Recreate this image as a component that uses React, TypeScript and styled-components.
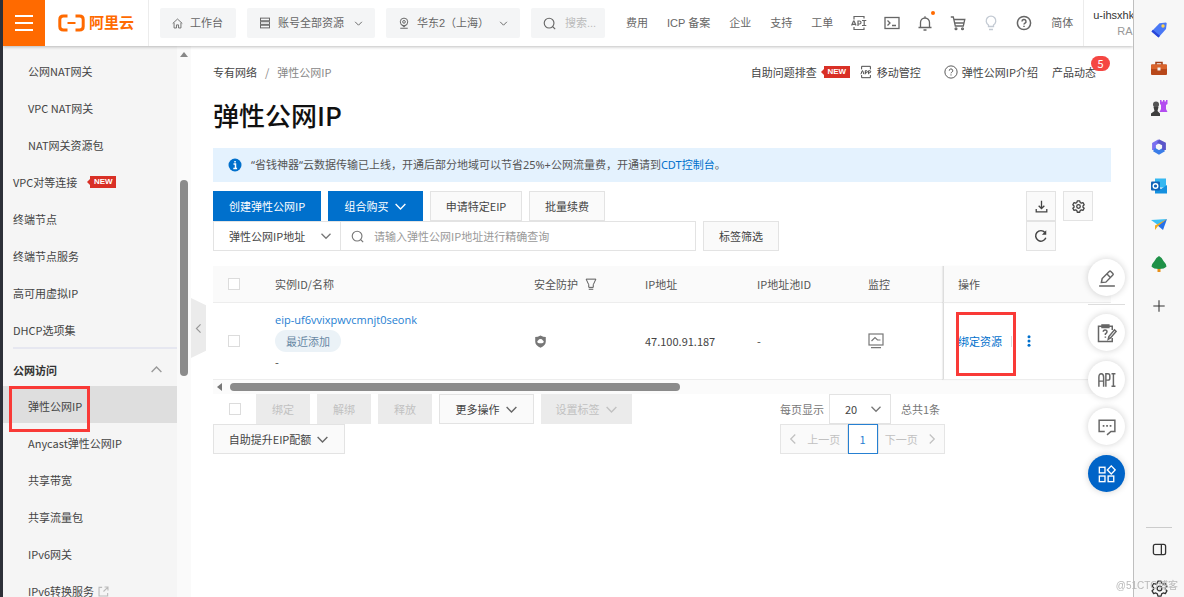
import React from 'react';
import styled, { createGlobalStyle, css } from 'styled-components';

const line = '#e5e5e5';
const blue = '#0070cc';

const Global = createGlobalStyle`
  * { box-sizing: border-box; }
  body { margin: 0; background: #fff; }
  body, button, input, select, table {
    font-family: "Noto Sans CJK SC", "Noto Sans", sans-serif;
    font-size: 11px;
    line-height: 16px;
    color: #444;
  }
  a { color: inherit; text-decoration: none; }
  button { cursor: pointer; }
  svg { display: block; flex: none; }
`;

/* ---------- shell ---------- */
const Shell = styled.div`
  display: flex;
  height: 100vh;
  overflow: hidden;
  border-left: 3px solid #2d3038;
`;
const Console = styled.div`
  flex: 1;
  min-width: 0;
  display: flex;
  flex-direction: column;
`;
const Body = styled.div`
  flex: 1;
  min-height: 0;
  display: flex;
`;

/* ---------- header ---------- */
const Header = styled.header`
  display: flex;
  align-items: center;
  height: 46px;
  overflow: hidden;
  background: #fff;
  font-family: "Liberation Sans", "Noto Sans CJK SC", sans-serif;
  white-space: nowrap;
  color: #666;
`;
const HeaderShade = styled.div`
  position: relative;
  z-index: 2;
  flex: none;
  background: #fff;
  box-shadow: 0 1px 3px rgba(0, 0, 0, 0.25);
`;
const MenuButton = styled.button`
  flex: none;
  display: grid;
  place-items: center;
  width: 42px;
  height: 46px;
  padding: 0;
  border: 0;
  background: #ff6a00;
`;
const Logo = styled.a`
  flex: none;
  display: flex;
  align-items: center;
  gap: 4px;
  width: 104px;
  height: 46px;
  margin-right: 11px;
  padding-left: 13px;
  border-right: 1px solid #ececec;
  font-size: 15px;
  line-height: 20px;
  font-weight: 700;
  color: #ff6a00;
`;
const Chips = styled.div`
  flex: none;
  display: flex;
  gap: 11px;
  margin-right: 21px;
`;
const Chip = styled.button<{ $w: number }>`
  display: flex;
  align-items: center;
  gap: 7px;
  width: ${p => p.$w}px;
  height: 30px;
  padding: 0 12px;
  border: 0;
  border-radius: 2px;
  background: #f4f5f6;
  font-family: inherit;
  color: #666;
  svg:last-child:not(:first-child) { margin-left: auto; }
`;
const HeaderSearch = styled.label`
  display: flex;
  align-items: center;
  gap: 9px;
  width: 74px;
  height: 30px;
  padding: 0 12px;
  border-radius: 2px;
  background: #f4f5f6;
  input {
    width: 32px;
    padding: 0;
    border: 0;
    background: none;
    font-family: inherit;
  }
  input::placeholder { color: #bbb; opacity: 1; }
`;
const TopLinks = styled.nav`
  flex: none;
  display: flex;
  gap: 19px;
  margin-right: 18px;
`;
const TopIcons = styled.div`
  flex: none;
  display: flex;
  align-items: center;
  gap: 17px;
  margin-right: 19px;
`;
const IconButton = styled.button`
  position: relative;
  display: grid;
  place-items: center;
  width: 16px;
  height: 16px;
  padding: 0;
  border: 0;
  background: none;
  color: #666;
`;
const Dot = styled.i`
  position: absolute;
  top: -4px;
  right: -2px;
  width: 4px;
  height: 4px;
  border-radius: 50%;
  background: #ff6a00;
`;
const User = styled.div`
  flex: 1 0 auto;
  display: flex;
  flex-direction: column;
  justify-content: center;
  height: 46px;
  margin-left: 10px;
  padding-left: 9px;
  border-left: 1px solid #ececec;
  color: #333;
  small { padding-left: 24px; font-size: 11px; color: #999; }
`;

/* ---------- side navigation ---------- */
const Side = styled.nav`
  flex: none;
  width: 174px;
  padding-top: 5px;
  overflow: hidden;
  background: #f5f5f5;
`;
const SideItem = styled.a<{ $sub?: boolean; $active?: boolean }>`
  display: flex;
  align-items: center;
  gap: 4px;
  height: 37px;
  padding: 3px 0 0 ${p => (p.$sub ? 25 : 10)}px;
  background: ${p => (p.$active ? '#dedede' : 'none')};
`;
const SideGroup = styled.button`
  display: flex;
  align-items: center;
  justify-content: space-between;
  width: 164px;
  height: 39px;
  margin-left: 10px;
  padding: 4px 14px 0 0;
  border: 0;
  border-top: 2px solid #e6e7f0;
  background: none;
  font-weight: 700;
  color: #333;
  svg { color: #999; }
`;
const SideScroll = styled.div`
  flex: none;
  display: flex;
  flex-direction: column;
  align-items: center;
  width: 14px;
  padding-top: 6px;
  background: #fafafa;
`;
const SideThumb = styled.div`
  width: 8px;
  height: 196px;
  margin-top: 123px;
  border-radius: 4px;
  background: #8b8b8b;
`;
const NewTag = styled.span<{ $ml: number }>`
  position: relative;
  width: 26px;
  margin-left: ${p => p.$ml}px;
  background: #d93026;
  font-family: "Liberation Sans", sans-serif;
  font-size: 8px;
  line-height: 12px;
  font-weight: 700;
  text-align: center;
  color: #fff;
  &::before {
    content: "";
    position: absolute;
    left: -3px;
    top: 3px;
    border: solid transparent;
    border-width: 3px 3px 3px 0;
    border-right-color: #d93026;
  }
`;
const Anchor = styled.div`
  position: relative;
`;
const Mark = styled.div`
  position: absolute;
  z-index: 4;
  border: 3px solid #f93a37;
  pointer-events: none;
`;
const NavMark = styled(Mark)`
  left: 6px;
  top: 0;
  width: 81px;
  height: 46px;
`;
const OpMark = styled(Mark)`
  right: 95px;
  top: 46px;
  width: 60px;
  height: 64px;
`;

/* ---------- main ---------- */
const Main = styled.main`
  position: relative;
  flex: 1;
  min-width: 0;
  padding: 17px 22px 0;
  white-space: nowrap;
`;
const Collapse = styled.button`
  position: absolute;
  left: 0;
  top: 252px;
  display: grid;
  place-items: center;
  width: 15px;
  height: 60px;
  padding: 0;
  border: 0;
  background: #ebebeb;
  color: #999;
  clip-path: polygon(0 0, 100% 12%, 100% 88%, 0 100%);
`;
const TopRow = styled.div`
  display: flex;
  justify-content: space-between;
  align-items: center;
  height: 18px;
`;
const Crumbs = styled.nav`
  display: flex;
  gap: 8px;
  span { color: #888; }
`;
const HelpLinks = styled.div`
  display: flex;
  align-items: center;
  padding-right: 15px;
`;
const HelpLink = styled.a<{ $gap: number }>`
  position: relative;
  display: flex;
  align-items: center;
  gap: 4px;
  margin-left: ${p => p.$gap}px;
`;
const Badge = styled.span`
  position: absolute;
  right: -14px;
  top: -8px;
  width: 19px;
  border-radius: 8px;
  background: #f54743;
  line-height: 15px;
  text-align: center;
  color: #fff;
`;
const Title = styled.h1`
  margin: 15px 0;
  font-size: 26px;
  line-height: 37px;
  font-weight: 500;
  color: #111;
`;
const Notice = styled.p`
  display: flex;
  align-items: center;
  height: 34px;
  margin: 0 0 9px;
  padding: 0 15px;
  background: #e4f2fe;
  font-family: "Noto Sans", "Noto Sans CJK SC", sans-serif;
  color: #555;
  svg { margin-right: 9px; }
  a { color: ${blue}; }
`;
const Toolbar = styled.div`
  display: flex;
  justify-content: space-between;
  margin-bottom: 15px;
`;
const Rows = styled.div`
  display: flex;
  flex-direction: column;
`;
const Line = styled.div<{ $gap?: number }>`
  display: flex;
  align-items: center;
  gap: ${p => p.$gap ?? 7}px;
`;
const Btn = styled.button<{ $kind?: 'primary'; $w: number }>`
  flex: none;
  display: flex;
  align-items: center;
  justify-content: center;
  gap: 5px;
  width: ${p => p.$w}px;
  height: 30px;
  padding: 0;
  border: 1px solid #e3e3e3;
  background: #fafafa;
  svg { color: #666; }
  ${p => p.$kind === 'primary' && css`
    border-color: ${blue};
    background: ${blue};
    &, svg { color: #fff; }
  `}
  &:disabled {
    border-color: #ebebeb;
    background: #ebebeb;
    &, svg { color: #c1c1c1; }
  }
`;
const Tools = styled.div`
  display: grid;
  grid-template-columns: 30px 30px;
  column-gap: 7px;
  margin-right: 18px;
  svg { color: #444; }
`;
const SelectBox = styled.label<{ $w: number }>`
  flex: none;
  display: flex;
  align-items: center;
  width: ${p => p.$w}px;
  height: 30px;
  padding-right: 8px;
  border: 1px solid #e3e3e3;
  color: #777;
  select {
    flex: 1;
    min-width: 0;
    height: 28px;
    padding: 0 0 0 15px;
    border: 0;
    appearance: none;
    background: none;
  }
`;
const SearchBox = styled.label`
  flex: none;
  display: flex;
  align-items: center;
  gap: 10px;
  width: 356px;
  height: 30px;
  margin: 0 7px 0 -1px;
  padding-left: 10px;
  border: 1px solid #e3e3e3;
  color: #777;
  input {
    flex: 1;
    padding: 0;
    border: 0;
    outline: 0;
  }
  input::placeholder { color: #999; opacity: 1; }
`;

/* ---------- table ---------- */
const Table = styled.table`
  width: 100%;
  table-layout: fixed;
  border-collapse: separate;
  border-spacing: 0;
  th, td {
    padding: 0 0 0 18px;
    border-bottom: 1px solid #ededed;
    font-weight: 400;
    text-align: left;
  }
  th { height: 37px; background: #fafafa; color: #555; }
  td { height: 77px; line-height: 20px; }
  th:first-child, td:first-child { padding-left: 15px; }
  th:last-child, td:last-child {
    padding-left: 14px;
    border-left: 1px solid #ddd;
    box-shadow: -1px 0 1px rgba(0, 0, 0, 0.06);
  }
`;
const Check = styled.input.attrs({ type: 'checkbox' })`
  display: block;
  appearance: none;
  flex: none;
  width: 12px;
  height: 12px;
  margin: 0;
  border: 1px solid #dcdcdc;
  background: #fff;
`;
const Inst = styled.a`
  display: block;
  font-family: "Open Sans", "Noto Sans CJK SC", sans-serif;
  color: #2680d2;
`;
const Pill = styled.span`
  display: block;
  width: 66px;
  border-radius: 11px;
  background: #ebf2f7;
  line-height: 22px;
  text-align: center;
  color: #6787a3;
`;
const Ops = styled.div`
  display: flex;
  align-items: center;
  gap: 9px;
  color: ${blue};
  i { width: 1px; height: 11px; background: #ddd; }
`;
const HScroll = styled.div`
  display: flex;
  align-items: center;
  gap: 8px;
  height: 14px;
  padding-left: 4px;
  background: #fbfbfb;
`;
const HThumb = styled.div`
  width: 450px;
  height: 8px;
  border-radius: 4px;
  background: #8b8b8b;
`;
const Footer = styled.div`
  display: flex;
  justify-content: space-between;
  padding-right: 166px;
`;
const BatchLine = styled(Line)`
  padding-left: 16px;
  ${Check} { margin-right: 8px; }
`;
const PageSize = styled.div`
  display: flex;
  align-items: center;
  height: 30px;
  color: #777;
  ${SelectBox} { margin: 0 10px 0 5px; }
`;
const Pager = styled.nav`
  display: flex;
  width: 165px;
  height: 30px;
`;
const PageBtn = styled.button<{ $on?: boolean }>`
  flex: ${p => (p.$on ? '0 0 30px' : '1')};
  display: flex;
  align-items: center;
  justify-content: center;
  gap: 8px;
  padding: 0;
  border: 1px solid ${p => (p.$on ? '#2680d2' : line)};
  background: ${p => (p.$on ? '#fff' : '#fafafa')};
  color: ${p => (p.$on ? '#2680d2' : '#c1c1c1')};
`;

/* ---------- floating helpers ---------- */
const Float = styled.aside`
  position: absolute;
  z-index: 3;
  right: 8px;
  top: 213px;
  display: flex;
  flex-direction: column;
  gap: 10px;
  hr {
    width: 37px;
    height: 1px;
    margin: -2px 0 -1px;
    border: 0;
    background: #ddd;
  }
`;
const Round = styled.button<{ $solid?: boolean }>`
  display: grid;
  place-items: center;
  width: 37px;
  height: 37px;
  padding: 0;
  border: 0;
  border-radius: 50%;
  background: ${p => (p.$solid ? '#0064c8' : '#fff')};
  color: ${p => (p.$solid ? '#fff' : '#666')};
  box-shadow: 0 0 7px rgba(0, 0, 0, 0.18);
`;

/* ---------- browser rail ---------- */
const Rail = styled.aside`
  position: relative;
  z-index: 3;
  flex: none;
  display: flex;
  flex-direction: column;
  align-items: center;
  justify-content: space-between;
  width: 51px;
  padding-top: 21px;
  border-left: 1px solid #bfbfbf;
  background: #f7f7f7;
`;
const RailGroup = styled.div`
  display: flex;
  flex-direction: column;
  align-items: center;
  gap: 21px;
  hr { width: 26px; height: 1px; margin: 0 0 -9px; border: 0; background: #ccc; }
`;
const RailButton = styled.button<{ $top?: number }>`
  display: grid;
  place-items: center;
  width: 18px;
  height: 18px;
  margin-top: ${p => p.$top ?? 0}px;
  padding: 0;
  border: 0;
  background: none;
  color: #333;
`;
const Watermark = styled.span`
  position: fixed;
  z-index: 5;
  right: 6px;
  bottom: 3px;
  font-family: "Liberation Sans", "Noto Sans CJK SC", sans-serif;
  font-size: 10px;
  color: #b9b9b9;
`;

/* ---------- drawings ---------- */
type IconProps = { size?: number; sw?: number; children: React.ReactNode };
const Icon = ({ size = 16, sw = 1.3, children }: IconProps) => (
  <svg width={size} height={size} viewBox="0 0 16 16" fill="none" stroke="currentColor" strokeWidth={sw} aria-hidden="true">
    {children}
  </svg>
);
const Chevron = ({ dir = 'down', size = 12 }: { dir?: 'down' | 'up' | 'left' | 'right'; size?: number }) => {
  const d = { down: 'M2 5l6 6 6-6', up: 'M2 11l6-6 6 6', left: 'M11 2L5 8l6 6', right: 'M5 2l6 6-6 6' }[dir];
  return <Icon size={size} sw={1.7}><path d={d} /></Icon>;
};
const SearchIcon = () => <Icon size={13} sw={1.4}><circle cx="7.5" cy="7.5" r="6" /><path d="M12 12l3 3" /></Icon>;
const HelpMark = () => <path d="M6 6.500a2 2 0 1 1 2.800 1.800q-.8.400-.8 1.200M8 10.700v1.300" />;
const ApiIcon = () => (
  <Icon sw={1.2}>
    <path d="M3 4.500V1.500h10v2M3 12v2.500h10V12.500M.6 10.500L2.500 6h.6L5 10.500M1.500 9.300h2.800M7 11V6h1.500a1.500 1.500 0 0 1 0 3H7M11 5.500h4.300M11 10.500h4.300M13.200 5.500v5" />
  </Icon>
);
const AppIcon = () => (
  <Icon size={14} sw={1.1}>
    <path d="M3 5V1.500h10V5M3 11.500v3h10v-3M2.200 10.500L3.700 6.500h.5l1.400 4M7.200 10.500v-4h1.200a1.100 1.100 0 0 1 0 2.300H7.200M11 10.500v-4h1.200a1.100 1.100 0 0 1 0 2.300H11" />
  </Icon>
);
const GearIcon = ({ size = 16, sw = 1.3 }: { size?: number; sw?: number }) => (
  <Icon size={size} sw={sw}>
    <path strokeLinejoin="round" d="M6.500 1h3l.5 2 1.500.9 2-.6 1.500 2.600L13.500 7.300v1.500L15 10.200l-1.500 2.600-2-.6-1.500.9-.5 2h-3l-.5-2-1.500-.9-2 .6L1 10.200l1.500-1.400V7.300L1 5.900l1.500-2.600 2 .6L6 3z" />
    <circle cx="8" cy="8" r="2.200" />
  </Icon>
);

const sideTop = [
  { t: '公网NAT网关', sub: true }, { t: 'VPC NAT网关', sub: true }, { t: 'NAT网关资源包', sub: true },
  { t: 'VPC对等连接', tag: true }, { t: '终端节点' }, { t: '终端节点服务' }, { t: '高可用虚拟IP' }, { t: 'DHCP选项集' },
];
const sideBottom = ['Anycast弹性公网IP', '共享带宽', '共享流量包', 'IPv6网关'];

export default function App() {
  return (
    <Shell>
      <Global />
      <Console>
        <HeaderShade>
          <Header>
            <MenuButton aria-label="菜单">
              <svg width="20" height="16" viewBox="0 0 20 16" stroke="#fff" strokeWidth="1.800"><path d="M1 1h18M1 8h18M1 15h18" /></svg>
            </MenuButton>
            <Logo href="#">
              <svg width="27" height="18" viewBox="0 0 27 18" fill="none" stroke="#ff6a00">
                <path strokeWidth="3" d="M9.500 2H5.500Q1.800 2 1.800 5.500v7Q1.800 16 5.500 16h4M17.500 2h4q3.700 0 3.700 3.500v7q0 3.500-3.700 3.500h-4" />
                <path strokeWidth="2" d="M9.500 9h8" />
              </svg>
              阿里云
            </Logo>
            <Chips>
              <Chip $w={76}><Icon size={11}><path d="M1 8L8 1.500 15 8M3 7v7.500h3.500V10h3v4.500H13V7" strokeLinejoin="round" /></Icon>工作台</Chip>
              <Chip $w={128}><Icon size={12}><rect x="2" y="1.500" width="12" height="3.500" /><rect x="2" y="6.300" width="12" height="3.500" /><rect x="2" y="11" width="12" height="3.500" /></Icon>账号全部资源<Chevron size={9} /></Chip>
              <Chip $w={134}><Icon size={12}><circle cx="8" cy="6.500" r="5" /><circle cx="8" cy="6.500" r="1.800" /><path d="M4.500 10L8 13.500 11.500 10M3 15h10" /></Icon>华东2（上海）<Chevron size={9} /></Chip>
              <HeaderSearch><SearchIcon /><input aria-label="搜索" placeholder="搜索..." /></HeaderSearch>
            </Chips>
            <TopLinks>
              {['费用', 'ICP 备案', '企业', '支持', '工单'].map(t => <a href="#" key={t}>{t}</a>)}
            </TopLinks>
            <TopIcons>
              <IconButton aria-label="API"><ApiIcon /></IconButton>
              <IconButton aria-label="终端"><Icon><rect x="1" y="2.500" width="14" height="11" /><path d="M3.500 5.500L6 8l-2.500 2.500M8 10.500h4" /></Icon></IconButton>
              <IconButton aria-label="消息"><Icon><path d="M1.500 12.500h13M3.500 12.500V7.500a4.500 4.500 0 0 1 9 0v5M8 1.300V3M6.500 15h3" /></Icon><Dot /></IconButton>
              <IconButton aria-label="购物车"><Icon><path d="M.8 2H3.300l2 9h8l1.500-6.500H4M5 8h9" /><circle cx="6" cy="13.800" r=".9" /><circle cx="12.500" cy="13.800" r=".9" /></Icon></IconButton>
              <IconButton aria-label="提示"><svg width="16" height="16" viewBox="0 0 16 16" fill="none" stroke="#c3cad3" strokeWidth="1.300"><path d="M5.500 11.500V10a4.800 4.800 0 1 1 5 0v1.500zM6 14.500h4" /></svg></IconButton>
              <IconButton aria-label="帮助"><Icon sw={1.5}><circle cx="8" cy="8" r="6.600" /><HelpMark /></Icon></IconButton>
            </TopIcons>
            <a href="#">简体</a>
            <User><span>u-ihsxhk</span><small>RA</small></User>
          </Header>
        </HeaderShade>

        <Body>
          <Side>
            {sideTop.map(i => (
              <SideItem href="#" key={i.t} $sub={i.sub}>{i.t}{i.tag && <NewTag $ml={9}>NEW</NewTag>}</SideItem>
            ))}
            <SideGroup>公网访问<Chevron dir="up" size={13} /></SideGroup>
            <Anchor>
              <SideItem href="#" $sub $active>弹性公网IP</SideItem>
              <NavMark />
            </Anchor>
            {sideBottom.map(t => <SideItem href="#" key={t} $sub>{t}</SideItem>)}
            <SideItem href="#" $sub>IPv6转换服务
              <svg width="11" height="11" viewBox="0 0 16 16" fill="none" stroke="#bbb" strokeWidth="1.600"><path d="M6 2H1.500v12.500H14V10M9.500 1.500h5v5M14.500 1.500L8 8" /></svg>
            </SideItem>
          </Side>
          <SideScroll>
            <svg width="8" height="5" viewBox="0 0 8 5" fill="#888"><path d="M4 0l4 5H0z" /></svg>
            <SideThumb />
          </SideScroll>

          <Main>
            <Collapse aria-label="收起"><Chevron dir="left" size={11} /></Collapse>
            <TopRow>
              <Crumbs><a href="#">专有网络</a><span>/</span><span>弹性公网IP</span></Crumbs>
              <HelpLinks>
                <HelpLink href="#" $gap={0}>自助问题排查<NewTag $ml={3}>NEW</NewTag></HelpLink>
                <HelpLink href="#" $gap={9}><AppIcon />移动管控</HelpLink>
                <HelpLink href="#" $gap={23}><Icon size={14} sw={1}><circle cx="8" cy="8" r="7" /><HelpMark /></Icon>弹性公网IP介绍</HelpLink>
                <HelpLink href="#" $gap={14}>产品动态<Badge>5</Badge></HelpLink>
              </HelpLinks>
            </TopRow>
            <Title>弹性公网IP</Title>
            <Notice>
              <svg width="14" height="14" viewBox="0 0 14 14"><circle cx="7" cy="7" r="6.500" fill={blue} /><path d="M5.500 6H7.500v4.300M5.300 10.500h3.800M6.300 3.700h1.500" stroke="#fff" strokeWidth="1.500" fill="none" /></svg>
              “省钱神器“云数据传输已上线，开通后部分地域可以节省25%+公网流量费，开通请到<a href="#">CDT控制台</a>。
            </Notice>

            <Toolbar>
              <Rows>
                <Line>
                  <Btn $w={108} $kind="primary">创建弹性公网IP</Btn>
                  <Btn $w={95} $kind="primary">组合购买<Chevron size={13} /></Btn>
                  <Btn $w={92}>申请特定EIP</Btn>
                  <Btn $w={76}>批量续费</Btn>
                </Line>
                <Line $gap={0}>
                  <SelectBox $w={128}>
                    <select aria-label="搜索字段"><option>弹性公网IP地址</option></select>
                    <Chevron size={12} />
                  </SelectBox>
                  <SearchBox><SearchIcon /><input aria-label="IP地址" placeholder="请输入弹性公网IP地址进行精确查询" /></SearchBox>
                  <Btn $w={76}>标签筛选</Btn>
                </Line>
              </Rows>
              <Tools>
                <Btn $w={30} aria-label="下载"><Icon size={13} sw={1.6}><path d="M8 1v9.500M4.500 7L8 10.500 11.500 7M1.500 11v3.500h13V11" /></Icon></Btn>
                <Btn $w={30} aria-label="设置"><GearIcon size={13} sw={1.6} /></Btn>
                <Btn $w={30} aria-label="刷新"><Icon size={14} sw={1.7}><path d="M13.500 10A6 6 0 1 1 12.500 4" /><path d="M14 1.500v5H9z" fill="currentColor" stroke="none" /></Icon></Btn>
              </Tools>
            </Toolbar>

            <Anchor>
              <Table>
                <colgroup>
                  <col width="44" /><col /><col width="111" /><col width="112" /><col width="111" /><col width="93" /><col width="168" />
                </colgroup>
                <thead>
                  <tr>
                    <th><Check aria-label="全选" /></th>
                    <th>实例ID/名称</th>
                    <th><Line>安全防护<Icon size={12}><path d="M1.500 1.500h13L11 9v3.500H5V9zM5 15h6" /></Icon></Line></th>
                    <th>IP地址</th>
                    <th>IP地址池ID</th>
                    <th>监控</th>
                    <th>操作</th>
                  </tr>
                </thead>
                <tbody>
                  <tr>
                    <td><Check aria-label="选择实例" /></td>
                    <td><Inst href="#">eip-uf6vvixpwvcmnjt0seonk</Inst><Pill>最近添加</Pill>-</td>
                    <td><svg width="13" height="13" viewBox="0 0 16 16"><path d="M8 .5q3.500 2 6.500 2V8q0 5-6.500 7.800Q1.500 13 1.500 8V2.500q3 0 6.500-2z" fill="#777" /><path d="M4.500 9.500a2 2 0 0 1 .8-3 3 3 0 0 1 5.400 0 2 2 0 0 1 .8 3q-3.500 1.500-7 0z" fill="#fff" /></svg></td>
                    <td>47.100.91.187</td>
                    <td>-</td>
                    <td><svg width="16" height="16" viewBox="0 0 16 16" fill="none" stroke="#777" strokeWidth="1.200"><rect x="1" y="1" width="14" height="11" /><path d="M3 14.700h10M3.500 8L7 4.500l2.500 2.500h3" /></svg></td>
                    <td><Ops><a href="#">绑定资源</a><i /><IconButton aria-label="更多"><svg width="4" height="12" viewBox="0 0 4 12" fill={blue}><circle cx="2" cy="1.800" r="1.500" /><circle cx="2" cy="6" r="1.500" /><circle cx="2" cy="10.200" r="1.500" /></svg></IconButton></Ops></td>
                  </tr>
                </tbody>
              </Table>
              <OpMark />
            </Anchor>
            <HScroll>
              <svg width="5" height="8" viewBox="0 0 5 8" fill="#777"><path d="M5 0v8L0 4z" /></svg>
              <HThumb />
            </HScroll>

            <Footer>
              <Rows>
                <BatchLine>
                  <Check aria-label="批量选择" />
                  <Btn $w={54} disabled>绑定</Btn>
                  <Btn $w={54} disabled>解绑</Btn>
                  <Btn $w={54} disabled>释放</Btn>
                  <Btn $w={95}>更多操作<Chevron size={13} /></Btn>
                  <Btn $w={91} disabled>设置标签<Chevron size={13} /></Btn>
                </BatchLine>
                <Btn $w={132}>自助提升EIP配额<Chevron size={13} /></Btn>
              </Rows>
              <Rows>
                <PageSize>
                  每页显示
                  <SelectBox $w={62}>
                    <select aria-label="每页显示"><option>20</option></select>
                    <Chevron size={12} />
                  </SelectBox>
                  <span>总共1条</span>
                </PageSize>
                <Pager>
                  <PageBtn disabled><Chevron dir="left" size={12} />上一页</PageBtn>
                  <PageBtn $on>1</PageBtn>
                  <PageBtn disabled>下一页<Chevron dir="right" size={12} /></PageBtn>
                </Pager>
              </Rows>
            </Footer>

            <Float>
              <Round aria-label="编辑"><Icon size={18}><path d="M1 15.200h14M3 12l.7-3.500L10 2.200a1 1 0 0 1 1.400 0l1.800 1.800a1 1 0 0 1 0 1.400L7 11.700zM8 4.500l3 3" /></Icon></Round>
              <hr />
              <Round aria-label="问卷"><Icon size={20} sw={1.2}><path d="M4 2.500H1.200v12.300h11V12M9.500 2.500h2.700v3M5 7q0-1.500 1.500-1.500T8 7q0 .8-1.300 1.700v.8M6.700 10.700v1M9 13l.5-2.200L14 5.500l1.300 1.200L10.800 12z" /><path d="M4 1.500h5.500v2H4z" fill="currentColor" /></Icon></Round>
              <Round aria-label="API"><Icon size={18} sw={1.3}><path d="M.8 14V5.500Q.8 2.500 2.900 2.500T5 5.500V14M.8 9H5M7 14V2.500h1.800q1.700 0 1.700 1.700v2.200q0 1.700-1.700 1.700H7M12 2.500h3.500M12 13.500h3.500M13.700 2.500v11" /></Icon></Round>
              <Round aria-label="反馈"><Icon size={18}><path d="M6 12H1V2h14v10h-3.500L8 15" /><path d="M4.200 7h1.500M7.300 7h1.500M10.400 7h1.500" strokeWidth="1.600" /></Icon></Round>
              <Round aria-label="应用" $solid><Icon size={18} sw={1.2}><rect x="1.200" y="2" width="5" height="5" /><rect x="1.200" y="9.800" width="5" height="5" /><rect x="9" y="9.800" width="5" height="5" /><path d="M11.800.8l3.500 3.600-3.500 3.600-3.500-3.600z" /></Icon></Round>
            </Float>
          </Main>
        </Body>
      </Console>

      <Rail>
        <RailGroup>
          <RailButton aria-label="购物"><svg width="18" height="18" viewBox="0 0 18 18"><path d="M9.500 2.300l6.500-.8.700.7-.7 5.800-7.500 8.500-7-6z" fill="#4a78f5" /><path d="M1.500 10.500l7 6 1.500-1.700L2.800 8.800z" fill="#2846d8" /><circle cx="13" cy="5" r="1.700" fill="#ffd34d" /></svg></RailButton>
          <RailButton aria-label="工具"><svg width="18" height="18" viewBox="0 0 18 18"><path d="M6 5V2.500h6V5" fill="none" stroke="#a03c14" strokeWidth="1.500" /><rect x="1" y="4.500" width="16" height="10.500" rx="1" fill="#b8481a" /><rect x="1" y="4.500" width="16" height="4.500" rx="1" fill="#d9632b" /><rect x="7.500" y="7.500" width="3" height="3" fill="#f3f3f3" /></svg></RailButton>
          <RailButton aria-label="游戏"><svg width="18" height="18" viewBox="0 0 18 18"><path d="M10 1h1.500v1.500h1.500V1h1.500v1.500H16V1h1.500v4l-1.500 1v4l1.500 3H9.500L11 10V6l-1-1z" fill="#b34df0" /><circle cx="6" cy="5.500" r="3" fill="#555" /><path d="M3.500 8h5l-1 4 2.500 2.500V17H1v-2.500L4.500 12z" fill="#3e3e3e" /></svg></RailButton>
          <RailButton aria-label="办公"><svg width="18" height="18" viewBox="0 0 18 18" fill="none" strokeWidth="3.800"><path d="M9 3.200L4 6v6" stroke="#7a6ff0" /><path d="M4 11.500l5 3 5-3" stroke="#3b7de8" /><path d="M8 3l6 3v6" stroke="#5a55c9" /></svg></RailButton>
          <RailButton aria-label="邮件"><svg width="18" height="18" viewBox="0 0 18 18"><rect x="5" y="1.500" width="11" height="9" fill="#35b8f1" /><path d="M5 8l6 4 6-4v8.500H5z" fill="#1490df" /><rect x="1" y="4.500" width="9" height="9" rx="1" fill="#0f63b8" /><circle cx="5.500" cy="9" r="2.300" fill="none" stroke="#fff" strokeWidth="1.400" /></svg></RailButton>
          <RailButton aria-label="投递"><svg width="18" height="18" viewBox="0 0 18 18"><path d="M1 4l16-1-9 6z" fill="#3cc0f5" /><path d="M17 3l-4 11-6-5z" fill="#2670e8" /><path d="M17 3L5 9.500V14l3-4z" fill="#f3ab1c" /></svg></RailButton>
          <RailButton aria-label="树"><svg width="18" height="18" viewBox="0 0 18 18"><rect x="7.500" y="13" width="3" height="4" fill="#e8901b" /><path d="M9 1q3 1.500 4.500 5 2.500 2.500 3 5.500-2 2.500-7.500 2.500t-7.500-2.500Q2 8.500 4.500 6 6 2.500 9 1z" fill="#1f9148" /></svg></RailButton>
          <RailButton aria-label="添加" $top={3}><Icon size={14} sw={1.2}><path d="M8 1.500v13M1.500 8h13" /></Icon></RailButton>
        </RailGroup>
        <RailGroup>
          <hr />
          <RailButton aria-label="侧栏"><Icon size={15} sw={1.4}><rect x="1.500" y="2.500" width="13" height="11" rx="2" /><path d="M10 2.500v11" /></Icon></RailButton>
          <RailButton aria-label="设置"><GearIcon size={17} sw={1.2} /></RailButton>
        </RailGroup>
      </Rail>
      <Watermark>@51CTO博客</Watermark>
    </Shell>
  );
}
